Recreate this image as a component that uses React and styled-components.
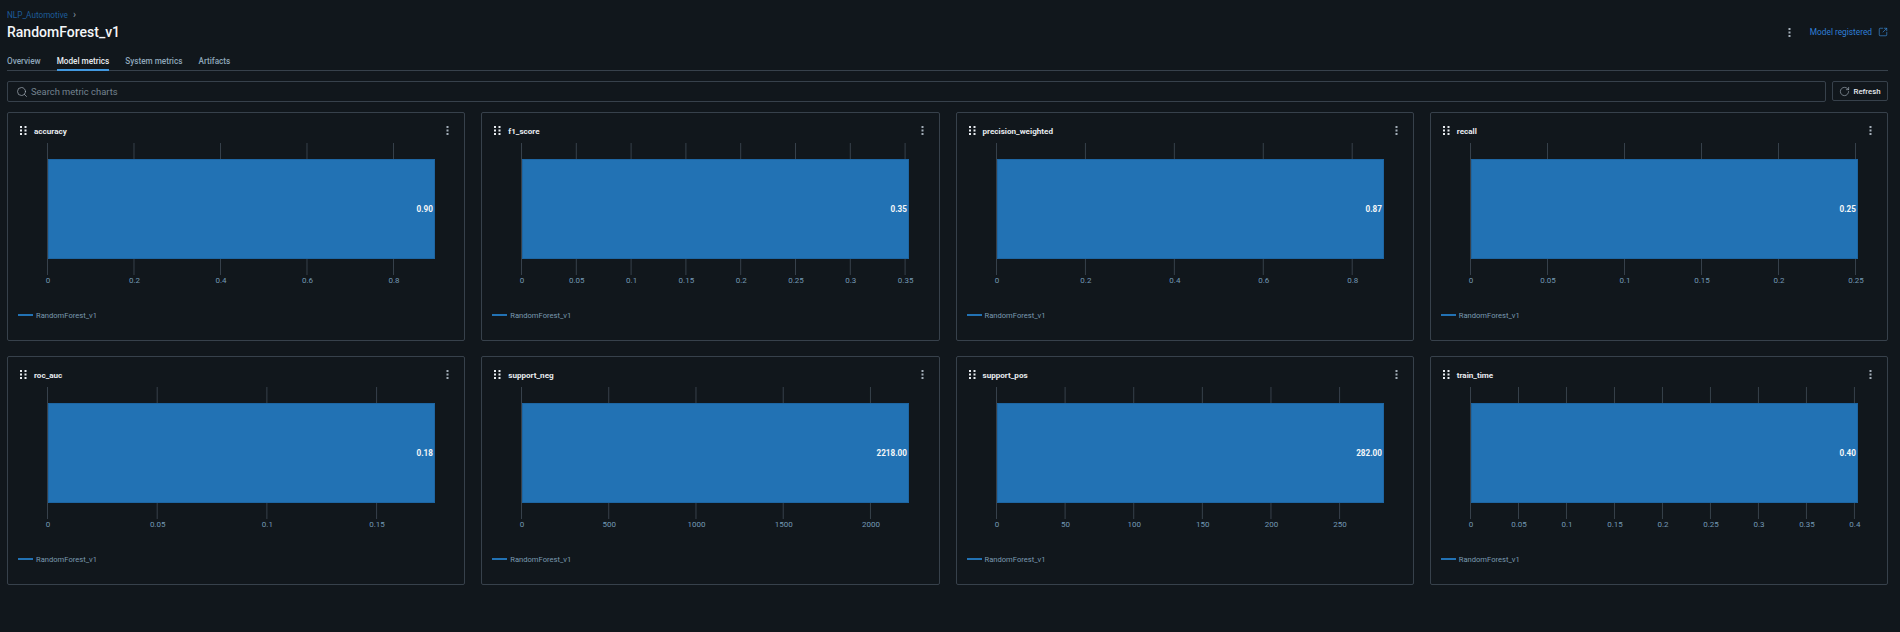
import React from 'react';
import styled, { createGlobalStyle } from 'styled-components';
import { Search, RotateCw, SquareArrowOutUpRight } from 'lucide-react';

const metrics = [
	{ name: 'accuracy', value: 0.8948, label: '0.90', step: 0.2, ticks: ['0', '0.2', '0.4', '0.6', '0.8'] },
	{ name: 'f1_score', value: 0.3531, label: '0.35', step: 0.05, ticks: ['0', '0.05', '0.1', '0.15', '0.2', '0.25', '0.3', '0.35'] },
	{ name: 'precision_weighted', value: 0.8704, label: '0.87', step: 0.2, ticks: ['0', '0.2', '0.4', '0.6', '0.8'] },
	{ name: 'recall', value: 0.2513, label: '0.25', step: 0.05, ticks: ['0', '0.05', '0.1', '0.15', '0.2', '0.25'] },
	{ name: 'roc_auc', value: 0.1764, label: '0.18', step: 0.05, ticks: ['0', '0.05', '0.1', '0.15'] },
	{ name: 'support_neg', value: 2218, label: '2218.00', step: 500, ticks: ['0', '500', '1000', '1500', '2000'] },
	{ name: 'support_pos', value: 282, label: '282.00', step: 50, ticks: ['0', '50', '100', '150', '200', '250'] },
	{ name: 'train_time', value: 0.4032, label: '0.40', step: 0.05, ticks: ['0', '0.05', '0.1', '0.15', '0.2', '0.25', '0.3', '0.35', '0.4'] },
];

const PLOT_LEFT = 40;
const PLOT_WIDTH = 387;

function GripIcon() {
	return (
		<svg width='7' height='9' viewBox='0 0 7 9' fill='#e8ecf0'>
			{[0, 3.5, 7].map((y) => (
				<React.Fragment key={y}>
					<rect x='0' y={y} width='2' height='2' />
					<rect x='4.5' y={y} width='2' height='2' />
				</React.Fragment>
			))}
		</svg>
	);
}

function KebabIcon() {
	return (
		<svg width='3' height='9' viewBox='0 0 3 9' fill='#a3aeb8'>
			<rect x='0.5' y='0' width='2' height='2' />
			<rect x='0.5' y='3.5' width='2' height='2' />
			<rect x='0.5' y='7' width='2' height='2' />
		</svg>
	);
}

function BarChart({ metric }) {
	const scale = PLOT_WIDTH / metric.value;
	const barEnd = PLOT_LEFT + PLOT_WIDTH;
	return (
		<ChartSvg width='456' height='146' viewBox='0 0 456 146'>
			{metric.ticks.map((t, i) => {
				const x = PLOT_LEFT + i * metric.step * scale;
				return (
					<g key={t}>
						<line x1={x - 0.5} x2={x - 0.5} y1='0' y2='132' stroke='#37414b' />
						<TickText x={x} y='140' textAnchor='middle'>
							{t}
						</TickText>
					</g>
				);
			})}
			<rect x={PLOT_LEFT} y='16' width={PLOT_WIDTH} height='100' fill='#2272b4' />
			<rect x={PLOT_LEFT + 0.5} y='16.5' width={PLOT_WIDTH - 1} height='99' fill='none' stroke='#1c5f97' strokeOpacity='0.6' />
			<ValueText x={barEnd - 2} y='69' textAnchor='end'>
				{metric.label}
			</ValueText>
		</ChartSvg>
	);
}

export default function App() {
	return (
		<>
			<GlobalStyle />
			<Page>
				<Header>
					<div>
						<Breadcrumb>
							<span>NLP_Automotive</span>
							<Chevron>›</Chevron>
						</Breadcrumb>
						<Title>RandomForest_v1</Title>
					</div>
					<HeaderActions>
						<KebabIcon />
						<RegisteredLink>
							Model registered
							<SquareArrowOutUpRight size={10} strokeWidth={1.6} />
						</RegisteredLink>
					</HeaderActions>
				</Header>
				<Tabs>
					<Tab>Overview</Tab>
					<Tab $active>Model metrics</Tab>
					<Tab>System metrics</Tab>
					<Tab>Artifacts</Tab>
				</Tabs>
				<Toolbar>
					<SearchBox>
						<Search size={12} strokeWidth={1.4} color='#a3aeb8' />
						<span>Search metric charts</span>
					</SearchBox>
					<RefreshButton>
						<RotateCw size={11} strokeWidth={1.4} color='#a3aeb8' />
						Refresh
					</RefreshButton>
				</Toolbar>
				<Grid>
					{metrics.map((metric) => (
						<Card key={metric.name}>
							<CardHeader>
								<GripIcon />
								<CardTitle>{metric.name}</CardTitle>
								<KebabIcon />
							</CardHeader>
							<BarChart metric={metric} />
							<Legend>
								<LegendLine />
								RandomForest_v1
							</Legend>
						</Card>
					))}
				</Grid>
			</Page>
		</>
	);
}

const GlobalStyle = createGlobalStyle`
	html, body {
		margin: 0;
		background: #11171c;
		font-family: Roboto, 'Open Sans', sans-serif;
	}
`;
const Page = styled.div`
	height: 632px;
	box-sizing: border-box;
	padding: 9px 12px 0 7px;
	background: #11171c;
	overflow: hidden;
`;
const Header = styled.header`
	display: flex;
	justify-content: space-between;
	align-items: flex-start;
	height: 43px;
`;
const Breadcrumb = styled.div`
	display: flex;
	align-items: center;
	gap: 5px;
	height: 12px;
	font-size: 8.2px;
	line-height: 12px;
	color: #1d5c99;
`;
const Chevron = styled.span`
	color: #8796a3;
	font-size: 10px;
`;
const Title = styled.h1`
	margin: 1px 0 0;
	font-size: 14px;
	line-height: 20px;
	font-weight: 500;
	color: #f4f6f8;
`;
const HeaderActions = styled.div`
	display: flex;
	align-items: center;
	gap: 19px;
	height: 18px;
	margin-top: 14px;
`;
const RegisteredLink = styled.span`
	display: flex;
	align-items: center;
	gap: 6px;
	font-size: 8.3px;
	color: #2f7fd6;
	svg {
		color: #3b8bd8;
	}
`;
const Tabs = styled.nav`
	display: flex;
	gap: 16px;
	height: 18px;
	border-bottom: 1px solid #37414b;
`;
const Tab = styled.span`
	height: ${(p) => (p.$active ? '19px' : '18px')};
	box-sizing: border-box;
	line-height: 18px;
	font-size: 8.2px;
	font-weight: 500;
	color: ${(p) => (p.$active ? '#e8ecf0' : '#8fa7bb')};
	border-bottom: ${(p) => (p.$active ? '2px solid #4299e0' : 'none')};
`;
const Toolbar = styled.div`
	display: flex;
	gap: 6px;
	margin-top: 10px;
`;
const SearchBox = styled.div`
	flex: 1;
	display: flex;
	align-items: center;
	gap: 3px;
	height: 21px;
	box-sizing: border-box;
	padding: 0 8px;
	border: 1px solid #37414b;
	border-radius: 2px;
	font-size: 9.4px;
	color: #74838f;
`;
const RefreshButton = styled.div`
	display: flex;
	align-items: center;
	justify-content: center;
	gap: 3px;
	width: 56px;
	height: 20px;
	box-sizing: border-box;
	border: 1px solid #37414b;
	border-radius: 2px;
	font-size: 7.8px;
	font-weight: 500;
	color: #e8ecf0;
`;
const Grid = styled.section`
	display: grid;
	grid-template-columns: repeat(4, 1fr);
	grid-auto-rows: 229px;
	gap: 15px 16px;
	margin-top: 10px;
`;
const Card = styled.article`
	display: flex;
	flex-direction: column;
	box-sizing: border-box;
	padding-top: 13px;
	border: 1px solid #37414b;
	border-radius: 2px;
`;
const CardHeader = styled.div`
	display: flex;
	align-items: center;
	gap: 7px;
	height: 9px;
	padding: 0 15px 0 12px;
`;
const CardTitle = styled.span`
	flex: 1;
	font-size: 8.1px;
	font-weight: 700;
	color: #e8ecf0;
`;
const ChartSvg = styled.svg`
	display: block;
	margin-top: 8px;
`;
const TickText = styled.text`
	font-size: 8px;
	fill: #7399b5;
`;
const ValueText = styled.text`
	font-size: 8.2px;
	font-weight: 700;
	fill: #f4f6f8;
`;
const Legend = styled.div`
	display: flex;
	align-items: center;
	gap: 3px;
	margin: 20px 0 0 10px;
	height: 12px;
	font-size: 7.6px;
	color: #7a9ab0;
`;
const LegendLine = styled.span`
	width: 15px;
	height: 2px;
	background: #2272b4;
`;
